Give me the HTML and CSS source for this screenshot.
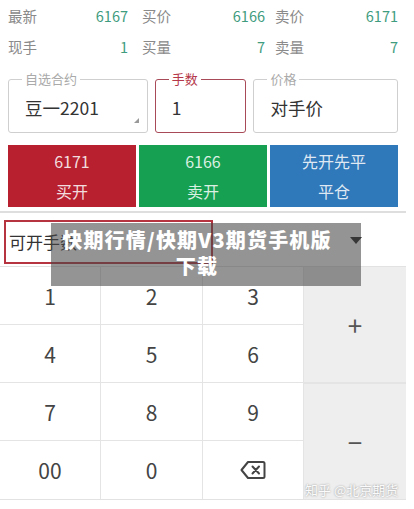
FILE: index.html
```html
<!DOCTYPE html>
<html lang="zh-CN">
<head>
    <meta charset="UTF-8">
    <meta name="viewport" content="width=device-width, initial-scale=1.0">
    <title>快期行情</title>
    <link rel="stylesheet" href="styles.css">
</head>
<body>
    <div class="page">
        <div class="quote">
            <div class="cell"><span class="label">最新</span><span class="value">6167</span></div>
            <div class="cell"><span class="label">买价</span><span class="value">6166</span></div>
            <div class="cell"><span class="label">卖价</span><span class="value">6171</span></div>
            <div class="cell"><span class="label">现手</span><span class="value">1</span></div>
            <div class="cell"><span class="label">买量</span><span class="value">7</span></div>
            <div class="cell"><span class="label">卖量</span><span class="value">7</span></div>
        </div>

        <div class="fields">
            <div class="field field-contract">
                <span class="field-label">自选合约</span>
                <span class="field-value">豆一2201</span>
                <span class="corner"></span>
            </div>
            <div class="field field-qty">
                <span class="field-label">手数</span>
                <span class="field-value">1</span>
            </div>
            <div class="field field-price">
                <span class="field-label">价格</span>
                <span class="field-value">对手价</span>
            </div>
        </div>

        <div class="actions">
            <button class="btn buy"><span>6171</span><span>买开</span></button>
            <button class="btn sell"><span>6166</span><span>卖开</span></button>
            <button class="btn close"><span>先开先平</span><span>平仓</span></button>
        </div>

        <div class="divider"></div>

        <div class="select-row">
            <div class="avail">可开手数</div>
            <span class="caret"></span>
        </div>

        <div class="keypad">
            <div class="key">1</div>
            <div class="key">2</div>
            <div class="key">3</div>
            <div class="key side plus">+</div>
            <div class="key">4</div>
            <div class="key">5</div>
            <div class="key">6</div>
            <div class="key">7</div>
            <div class="key">8</div>
            <div class="key">9</div>
            <div class="key side minus">−</div>
            <div class="key">00</div>
            <div class="key">0</div>
            <div class="key">
                <svg width="26" height="20" viewBox="0 0 26 20" fill="none" stroke="#444" stroke-width="2" stroke-linejoin="round" stroke-linecap="round">
                    <path d="M8 2 H23 a1.5 1.5 0 0 1 1.5 1.5 V16.5 a1.5 1.5 0 0 1 -1.5 1.5 H8 L1.5 10 Z"/>
                    <path d="M12.5 6.5 L19 13.5 M19 6.5 L12.5 13.5"/>
                </svg>
            </div>
        </div>

        <div class="watermark">知乎 @北京期货</div>

        <div class="banner">快期行情/快期V3期货手机版<br>下载</div>
    </div>
</body>
</html>
```

FILE: styles.css
```css
body {
    margin: 0;
    background: #fff;
    font-family: "Noto Sans CJK SC", "Noto Sans", sans-serif;
    color: #333;
}

.page {
    position: relative;
    width: 414px;
    height: 509px;
    overflow: hidden;
}

/* quote header */
.quote {
    display: grid;
    grid-template-columns: 134px 133px 123px;
    padding: 0 16px 0 8px;
}

.cell {
    display: flex;
    justify-content: space-between;
    height: 31px;
    line-height: 31px;
    font-size: 14.5px;
    padding-right: 12px;
}

.cell:nth-child(3n+1) { padding-right: 14px; }
.cell:nth-child(3n+2) { padding-right: 10px; }
.cell:nth-child(3n) { padding-right: 0; }

.label {
    color: #8a8a8a;
}

.value {
    color: #3f9c7e;
}

/* order fields */
.fields {
    display: flex;
    gap: 7px;
    padding: 17px 16px 0 8px;
}

.field {
    position: relative;
    height: 54px;
    border: 1px solid #cfcfcf;
    border-radius: 3px;
    display: flex;
    align-items: center;
    padding-left: 16px;
    box-sizing: border-box;
}

.field-contract { width: 140px; }
.field-qty { width: 92px; border-color: #a84a58; }
.field-price { width: 145px; }

.field-label {
    position: absolute;
    top: -10px;
    left: 13px;
    padding: 0 3px;
    background: #fff;
    font-size: 13px;
    line-height: 18px;
    color: #aaa;
}

.field-qty .field-label {
    color: #b5384a;
}

.field-value {
    font-size: 17.5px;
    color: #333;
    padding-top: 2px;
}

.corner {
    position: absolute;
    right: 8px;
    bottom: 9px;
    width: 0;
    height: 0;
    border-left: 5px solid transparent;
    border-bottom: 5px solid #999;
}

/* action buttons */
.actions {
    display: flex;
    gap: 3px;
    padding: 12px 16px 0 8px;
}

.btn {
    flex: 1;
    height: 62px;
    border: none;
    padding: 0;
    display: flex;
    flex-direction: column;
    justify-content: center;
    align-items: center;
    gap: 10px;
    font-family: inherit;
    font-size: 16px;
    line-height: 20px;
    color: rgba(255, 255, 255, 0.86);
}

.buy { background: #b8202f; }
.sell { background: #16a152; }
.close { background: #2f78b9; }

.divider {
    margin-top: 4px;
    width: 406px;
    height: 2px;
    background: #dedede;
}

/* available lots row */
.select-row {
    position: relative;
    height: 53px;
    width: 406px;
}

.avail {
    position: absolute;
    left: 4px;
    top: 7px;
    width: 209px;
    height: 44px;
    box-sizing: border-box;
    border: 2px solid #b5343f;
    padding-left: 3px;
    font-size: 17px;
    line-height: 40px;
    color: #333;
    white-space: nowrap;
    overflow: hidden;
}

.caret {
    position: absolute;
    left: 350px;
    top: 24px;
    width: 0;
    height: 0;
    border-left: 6px solid transparent;
    border-right: 6px solid transparent;
    border-top: 7px solid #222;
}

/* keypad */
.keypad {
    width: 406px;
    display: grid;
    grid-template-columns: 101px 102px 101px 102px;
    grid-template-rows: repeat(4, 58px);
    border-top: 1px solid #e2e2e2;
    border-bottom: 1px solid #e2e2e2;
}

.key {
    display: flex;
    justify-content: center;
    align-items: center;
    font-size: 21px;
    color: #444;
    border-right: 1px solid #e4e4e4;
    border-bottom: 1px solid #e4e4e4;
}

.key:nth-last-child(-n+3) {
    border-bottom: none;
}

.side {
    grid-column: 4;
    background: #eeeeee;
    border-right: none;
    font-size: 26px;
    color: #555;
}

.plus { grid-row: 1 / span 2; }
.minus { grid-row: 3 / span 2; border-top: 1px solid #e4e4e4; border-bottom: none; }

.watermark {
    position: absolute;
    left: 305px;
    top: 480px;
    font-size: 13px;
    color: #fbfbfb;
    text-shadow: 0 0 2px #888;
}

/* overlay banner */
.banner {
    position: absolute;
    left: 51px;
    top: 223px;
    width: 310px;
    height: 63px;
    background: rgba(70, 70, 70, 0.58);
    color: #fff;
    font-weight: 900;
    font-size: 20px;
    letter-spacing: 1.2px;
    line-height: 26px;
    text-align: center;
    padding: 4px 18px 0 0;
    box-sizing: border-box;
}
```
